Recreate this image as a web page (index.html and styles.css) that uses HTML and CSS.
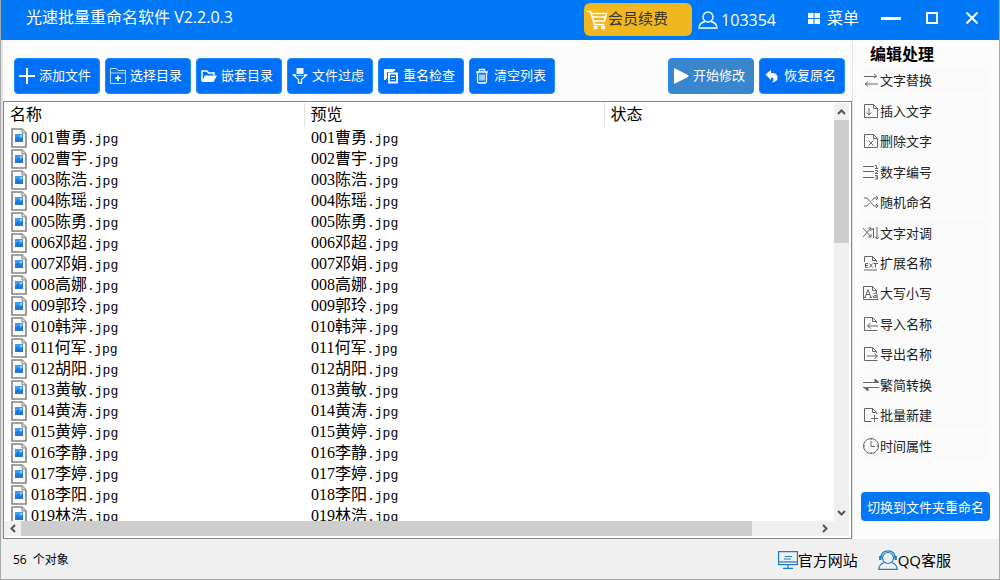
FILE: index.html
```html
<!DOCTYPE html>
<html lang="zh-CN">
<head>
<meta charset="utf-8">
<title>光速批量重命名软件</title>
<link rel="stylesheet" href="styles.css">
</head>
<body>
<div class="window">
  <header class="titlebar">
    <h1 class="app-title">光速批量重命名软件 V2.2.0.3</h1>
    <button class="renew" type="button">
      <svg width="22" height="22" viewBox="0 0 22 22" fill="none" stroke="#fff" stroke-width="1.6"><path d="M1 2.500h3.500l4 13h10M5 4.500h15.500l-2 7.500H7.500M6 8h13.500" /><circle cx="9.500" cy="18.500" r="1.300"/><circle cx="17" cy="18.500" r="1.300"/></svg>
      <span>会员续费</span>
    </button>
    <button class="user" type="button">
      <svg width="20" height="18" viewBox="0 0 20 18" fill="none" stroke="#fff" stroke-width="1.400"><circle cx="10" cy="6" r="5"/><path d="M7 10.500C3 11.500 1 13.500 1 17h18c0-3.500-2-5.500-6-6.500"/></svg>
      <span>103354</span>
    </button>
    <button class="menu" type="button">
      <svg width="12" height="12" viewBox="0 0 12 12" fill="#fff"><path d="M0 1h5.500v5H0zM6.500 1H12v5H6.500zM0 7h5.500v5H0zM6.500 7H12v5H6.500z"/></svg>
      <span>菜单</span>
    </button>
    <div class="window-controls">
      <button type="button" aria-label="最小化"><svg width="20" height="12" viewBox="0 0 20 12"><path d="M0 6.500h20" stroke="#fff" stroke-width="3"/></svg></button>
      <button type="button" aria-label="最大化"><svg width="12" height="12" viewBox="0 0 12 12"><path d="M1 1h10v10H1z" fill="none" stroke="#fff" stroke-width="2"/></svg></button>
      <button type="button" aria-label="关闭"><svg width="12" height="12" viewBox="0 0 12 12"><path d="M.5.5l11 11M11.500.5l-11 11" stroke="#fff" stroke-width="2"/></svg></button>
    </div>
  </header>

  <div class="content">
    <main class="workspace">
      <div class="toolbar">
        <button class="tool" type="button"><svg width="16" height="16" viewBox="0 0 16 16"><path d="M8 0v16M0 8h16" stroke="#fff" stroke-width="2"/></svg><span>添加文件</span></button>
        <button class="tool" type="button"><svg width="16" height="16" viewBox="0 0 16 16" fill="none" stroke="#b9dcff" stroke-width="1"><path d="M.5 15.500V.5h6l1.500 2h7.500v13zM.5 5h15"/><path d="M8 7.500v5.500M5.300 10.200h5.400" stroke="#fff" stroke-width="1.800"/></svg><span>选择目录</span></button>
        <button class="tool" type="button"><svg width="16" height="16" viewBox="0 0 16 16"><path d="M1 13V3h5l1.500 2H13v2.500" fill="none" stroke="#fff" stroke-width="1.500"/><path d="M4 7.500h12L12.500 14H.5z" fill="#fff"/></svg><span>嵌套目录</span></button>
        <button class="tool" type="button"><svg width="16" height="16" viewBox="0 0 16 16"><path d="M4.500 0h7v6h-7z" fill="#e6f2ff"/><path d="M4 7H1.500l5 4.500V15l3 .5v-4l5-4.500H12" fill="none" stroke="#fff" stroke-width="1.300"/><path d="M4.500 7.500h7" stroke="#b9dcff"/></svg><span>文件过虑</span></button>
        <button class="tool" type="button"><svg width="16" height="16" viewBox="0 0 16 16"><path d="M3 10.500H2.500V2.500h8V3" fill="none" stroke="#fff" stroke-width="3"/><path d="M6 5.500h8v9H6z" fill="none" stroke="#fff" stroke-width="2"/><path d="M8 8.500h4M8 11.500h4" stroke="#fff"/></svg><span>重名检查</span></button>
        <button class="tool" type="button"><svg width="16" height="16" viewBox="0 0 16 16" fill="none" stroke="#fff" stroke-width="1.300"><path d="M2 4h12M5.500 3.500V1.500h5v2M3.500 4v9.500q0 1.500 1.500 1.500h6q1.500 0 1.500-1.500V4M6 6.500v6M8 6.500v6M10 6.500v6"/></svg><span>清空列表</span></button>
        <button class="tool tool-start" type="button"><svg width="16" height="16" viewBox="0 0 16 16"><path d="M1 1v14q0 1 1 .5L15 9q1-1 0-2L2 .5Q1 0 1 1z" fill="#fff"/></svg><span>开始修改</span></button>
        <button class="tool" type="button"><svg width="16" height="16" viewBox="0 0 16 16"><path d="M1.500 6.500L7 2v3c5 0 7 2 6.500 5.500-.3 2-2 3.500-5.500 4 2-2 2.500-5-1-5V12z" fill="#fff"/></svg><span>恢复原名</span></button>
      </div>

      <section class="list" aria-label="文件列表">
        <div class="list-view">
          <table class="files">
            <colgroup><col class="col-name"><col class="col-preview"><col></colgroup>
            <thead><tr><th>名称</th><th>预览</th><th>状态</th></tr></thead>
            <tbody id="rows"></tbody>
          </table>
        </div>
        <div class="vbar">
          <button type="button" aria-label="向上滚动"><svg width="9" height="6" viewBox="0 0 9 6"><path d="M1 5l3.500-3.500L8 5" fill="none" stroke="#555" stroke-width="2"/></svg></button>
          <div class="vtrack"><div class="vthumb"></div></div>
          <button type="button" aria-label="向下滚动"><svg width="9" height="6" viewBox="0 0 9 6"><path d="M1 1l3.500 3.500L8 1" fill="none" stroke="#555" stroke-width="2"/></svg></button>
        </div>
        <div class="hbar">
          <button type="button" aria-label="向左滚动"><svg width="6" height="9" viewBox="0 0 6 9"><path d="M5 1L1.500 4.500 5 8" fill="none" stroke="#555" stroke-width="2"/></svg></button>
          <div class="htrack"><div class="hthumb"></div></div>
          <button type="button" aria-label="向右滚动"><svg width="6" height="9" viewBox="0 0 6 9"><path d="M1 1l3.500 3.500L1 8" fill="none" stroke="#555" stroke-width="2"/></svg></button>
        </div>
      </section>
    </main>

    <aside class="sidebar">
      <h2 class="side-title">编辑处理</h2>
      <nav class="side-nav">
        <button type="button"><svg viewBox="0 0 16 16"><path d="M1 4.500h13M11 1.800l3 2.700-3 1M15 12H2M5 9.800L2 12l3 2.500"/></svg><span>文字替换</span></button>
        <button type="button"><svg viewBox="0 0 16 16"><path d="M1.500 1.500h9l4 4v9h-13zM10.500 1.500v4h4M6 5v7M3.800 9.500L6 12l2.200-2.500"/></svg><span>插入文字</span></button>
        <button type="button"><svg viewBox="0 0 16 16"><path d="M1.500 1.500h9l4 4v9h-13zM10.500 1.500v4h4M5.500 7.500l5 5M10.500 7.500l-5 5"/></svg><span>删除文字</span></button>
        <button type="button"><svg viewBox="0 0 16 16"><path d="M0 2.500h11M0 7.500h11M0 13.500h11M12 1.500h1.500v3M12 4.500h3M12 6.500h2.500v1.500L12 9.500h3M12 11.500h2.500v3.500H12M12.500 13h2"/></svg><span>数字编号</span></button>
        <button type="button"><svg viewBox="0 0 16 16"><path d="M1 4h3l7 8h4M1 12h3l2.500-3M8.500 7L11 4h4M13 2l2 2-2 2M13 10l2 2-2 2"/></svg><span>随机命名</span></button>
        <button type="button"><svg viewBox="0 0 16 16"><path d="M0 3l8 9M0 12l8-9M5 3h3v3M5 12h3V9M10.500 13V3L9 5M14 2v12M11.800 11.500L14 14l2-2.500"/></svg><span>文字对调</span></button>
        <button type="button"><svg viewBox="0 0 16 16"><path d="M1.500 7V1.500h8l4 4V7M9.500 1.500v4h4M1 15h13M5 8.500H2.500v4H5M2.500 10.500H5M6.500 8.500l3 4M9.500 8.500l-3 4M10.500 8.500H15M12.500 8.500v4"/></svg><span>扩展名称</span></button>
        <button type="button"><svg viewBox="0 0 16 16"><path d="M.5 14.500v-13h9l4 4V8M9.500 1.500v4h4M.5 14.500h15M2 12.500l3-8 3 8M3 9.500h4M1 12.500h2M6.500 12.500H9M10.500 8.500q3.500-1.500 3.500 1v3.500h1M14 10.500q-4 0-4 1.500t4 0"/></svg><span>大写小写</span></button>
        <button type="button"><svg viewBox="0 0 16 16"><path d="M13.500 7V5.500l-4-4h-8v13h13M9.500 1.500v4h4M15 10H4.500M7.500 7l-3 3 3 2.500"/></svg><span>导入名称</span></button>
        <button type="button"><svg viewBox="0 0 16 16"><path d="M13.500 7V5.500l-4-4h-8v13h13M9.500 1.500v4h4M4 10h10.500M11.500 7.500l3 2.500-3 2.500"/></svg><span>导出名称</span></button>
        <button type="button"><svg viewBox="0 0 16 16"><path d="M0 5.500h15.500M16 10.500H0"/><path d="M12 2v3.500h4zM5 14v-3.500H1z" fill="#555"/></svg><span>繁简转换</span></button>
        <button type="button"><svg viewBox="0 0 16 16"><path d="M13.500 7V5.500l-4-4h-8v13h7M9.500 1.500v4h4M11.500 8v7M8 11.500h7"/></svg><span>批量新建</span></button>
        <button type="button"><svg viewBox="0 0 16 16"><circle cx="8" cy="8" r="7.500"/><path d="M8 3v5.500h4M8 .5v1.500M8 14v1.500M.5 8H2M14 8h1.500"/></svg><span>时间属性</span></button>
      </nav>
      <button class="switch" type="button">切换到文件夹重命名</button>
    </aside>
  </div>

  <footer class="statusbar">
    <p class="count"><span>56</span><span>个对象</span></p>
    <a class="link" href="#site"><svg width="20" height="18" viewBox="0 0 20 18" fill="none" stroke="#1d7fc4" stroke-width="1.200"><path d="M.6.6h18.800v13H.6zM.6 10.800h18.800M10 13.600V17M5 17.300h10M7 5.500h7M6 8h7"/></svg><span>官方网站</span></a>
    <a class="link" href="#support"><svg width="20" height="20" viewBox="0 0 20 20" fill="none" stroke="#1d7fc4" stroke-width="1.200"><circle cx="10" cy="8" r="5.500"/><path d="M3 8C3 3 6 .8 10 .8S17 3 17 8M6.500 12.500C3 13.500 1 15.500.8 19.400h18.400C19 15.500 17 13.500 13.500 12.500"/><path d="M2.300 6v4M17.700 6v4" stroke-width="2.400"/></svg><span>QQ客服</span></a>
  </footer>
</div>

<template id="row">
  <tr>
    <td><div class="cell"><svg width="16" height="20" viewBox="0 0 16 20"><path d="M1 1h10l4 4v14H1z" fill="#fafafa" stroke="#85857f" stroke-width="1.600"/><path d="M11 1v4h4" fill="#ddd" stroke="#85857f"/><path d="M4 6h8v8H4z" fill="#3d9bf2"/><path d="M4 14v-3l3-2.500 2.500 2.500L12 9v5z" fill="#2277d4"/><path d="M9 7h2v2H9z" fill="#8fd0ff"/></svg><span class="name"></span></div></td>
    <td><div class="cell"><span class="name"></span></div></td>
    <td></td>
  </tr>
</template>
<script src="app.js"></script>
</body>
</html>
```
FILE: styles.css
```css
* { box-sizing: border-box; }

body {
  margin: 0;
  font-family: "Open Sans", "Noto Sans CJK SC", sans-serif;
  color: #222;
}

button {
  margin: 0;
  padding: 0;
  border: 0;
  background: none;
  font: inherit;
  color: inherit;
  white-space: nowrap;
}

svg { display: block; flex: none; }

h1, h2, p { margin: 0; }

.window {
  display: flex;
  flex-direction: column;
  height: 100vh;
  border: 1px solid #a8a8a8;
  border-top: 0;
  background: #fcfcfc;
}

.titlebar {
  display: flex;
  align-items: center;
  flex: none;
  height: 40px;
  padding: 0 21px 4px 25px;
  background: #0078f8;
  color: #fff;
  font-size: 16px;
  line-height: 24px;
}

.app-title {
  flex: 1;
  padding-bottom: 2px;
  font-size: 16px;
  font-weight: 400;
}

.renew {
  display: flex;
  align-items: center;
  width: 108px;
  height: 33px;
  margin-top: 3px;
  padding-left: 2px;
  border-radius: 6px;
  background: #f0b71e;
  color: #333;
  font-size: 15px;
}

.renew span { padding-bottom: 3px; }

.user {
  display: flex;
  align-items: center;
  gap: 3px;
  margin: 4px 32px 0 6px;
}

.menu {
  display: flex;
  align-items: center;
  gap: 7px;
}

.window-controls {
  display: flex;
  align-items: center;
  gap: 25px;
  margin-left: 22px;
}

.window-controls button:last-child { margin-left: 3px; }

.content {
  display: flex;
  flex: 1;
  min-height: 0;
}

.workspace {
  display: flex;
  flex: 1;
  flex-direction: column;
  min-width: 0;
  border-left: 2px solid #e3e3e3;
}

.toolbar {
  display: flex;
  flex: none;
  gap: 5px;
  padding: 18px 7px 7px 11px;
}

.tool {
  display: flex;
  align-items: center;
  gap: 4px;
  width: 86px;
  height: 36px;
  padding-left: 4px;
  border: 1px solid #1b8cff;
  border-radius: 4px;
  background: #0070f8;
  color: #fff;
  font-size: 13px;
  line-height: 20px;
}

.tool span { padding-bottom: 2px; }

.tool-start {
  margin-left: auto;
  background: #3a86cc;
}

.list {
  display: grid;
  flex: 1;
  grid-template-columns: minmax(0, 1fr) 15px;
  grid-template-rows: minmax(0, 1fr) 15px;
  min-height: 0;
  padding: 1px 2px 2px 0;
  border: 1px solid #828790;
  background: #fff;
}

.list-view { overflow: hidden; }

.files {
  width: 100%;
  border-collapse: collapse;
  table-layout: fixed;
  color: #000;
  font-family: "Liberation Serif", "Noto Sans CJK SC", serif;
  font-size: 16px;
  line-height: 20px;
}

.col-name { width: 300px; }
.col-preview { width: 300px; }

.files th {
  height: 24px;
  padding: 0 6px;
  border-right: 1px solid #e3e3e3;
  font-weight: 400;
  text-align: left;
}

.files th:last-child { border-right: 0; }

.files td {
  height: 21px;
  padding: 0 7px;
  white-space: nowrap;
}

.cell {
  display: flex;
  align-items: center;
  gap: 4px;
  height: 20px;
}

.ext {
  font-family: "Liberation Mono", monospace;
  font-size: 13px;
  line-height: 13px;
}

.vbar, .hbar {
  display: flex;
  background: #f0f0f0;
}

.vbar { flex-direction: column; }
.hbar { grid-column: 1 / -1; padding-right: 16px; }

.vbar button, .hbar button {
  display: flex;
  align-items: center;
  justify-content: center;
  flex: none;
  width: 17px;
  height: 15px;
}

.vbar button { width: 15px; height: 17px; }

.vtrack, .htrack { flex: 1; }

.vthumb { height: 32%; background: #cdcdcd; }
.hthumb { width: 92%; height: 100%; background: #cdcdcd; }

.sidebar {
  display: flex;
  flex: none;
  flex-direction: column;
  width: 147px;
  padding: 2px 9px 18px 8px;
  border-left: 1px solid #e5e5e5;
}

.side-title {
  padding-left: 9px;
  color: #000;
  font-size: 16px;
  line-height: 24px;
}

.side-nav {
  display: grid;
  flex: 1;
  grid-auto-rows: minmax(0, 1fr);
  row-gap: 2px;
  margin-bottom: 32px;
}

.side-nav button {
  display: flex;
  align-items: center;
  gap: 1px;
  padding-left: 2px;
  border-radius: 4px;
  background: #fafafa;
  font-size: 13px;
  line-height: 20px;
}

.side-nav svg {
  width: 16px;
  height: 16px;
  fill: none;
  stroke: #666;
  stroke-width: 1;
}

.switch {
  height: 29px;
  border-radius: 4px;
  background: #0078f8;
  color: #fff;
  font-size: 13px;
  line-height: 20px;
}

.statusbar {
  display: flex;
  align-items: center;
  flex: none;
  gap: 20px;
  height: 40px;
  padding: 2px 48px 0 12px;
  background: #f0f0f0;
  color: #000;
  font-size: 15px;
  line-height: 22px;
}

.count {
  display: flex;
  flex: 1;
  gap: 6px;
  font-size: 12px;
}

.link {
  display: flex;
  align-items: center;
  color: inherit;
  text-decoration: none;
}
```
FILE: app.js
```js
const names = [
  "001曹勇", "002曹宇", "003陈浩", "004陈瑶", "005陈勇", "006邓超", "007邓娟",
  "008高娜", "009郭玲", "010韩萍", "011何军", "012胡阳", "013黄敏", "014黄涛",
  "015黄婷", "016李静", "017李婷", "018李阳", "019林浩"
];

const body = document.getElementById("rows");
const template = document.getElementById("row");

for (const name of names) {
  const row = template.content.cloneNode(true);
  for (const slot of row.querySelectorAll(".name")) {
    const ext = document.createElement("span");
    ext.className = "ext";
    ext.textContent = ".jpg";
    slot.append(name, ext);
  }
  body.append(row);
}
```
